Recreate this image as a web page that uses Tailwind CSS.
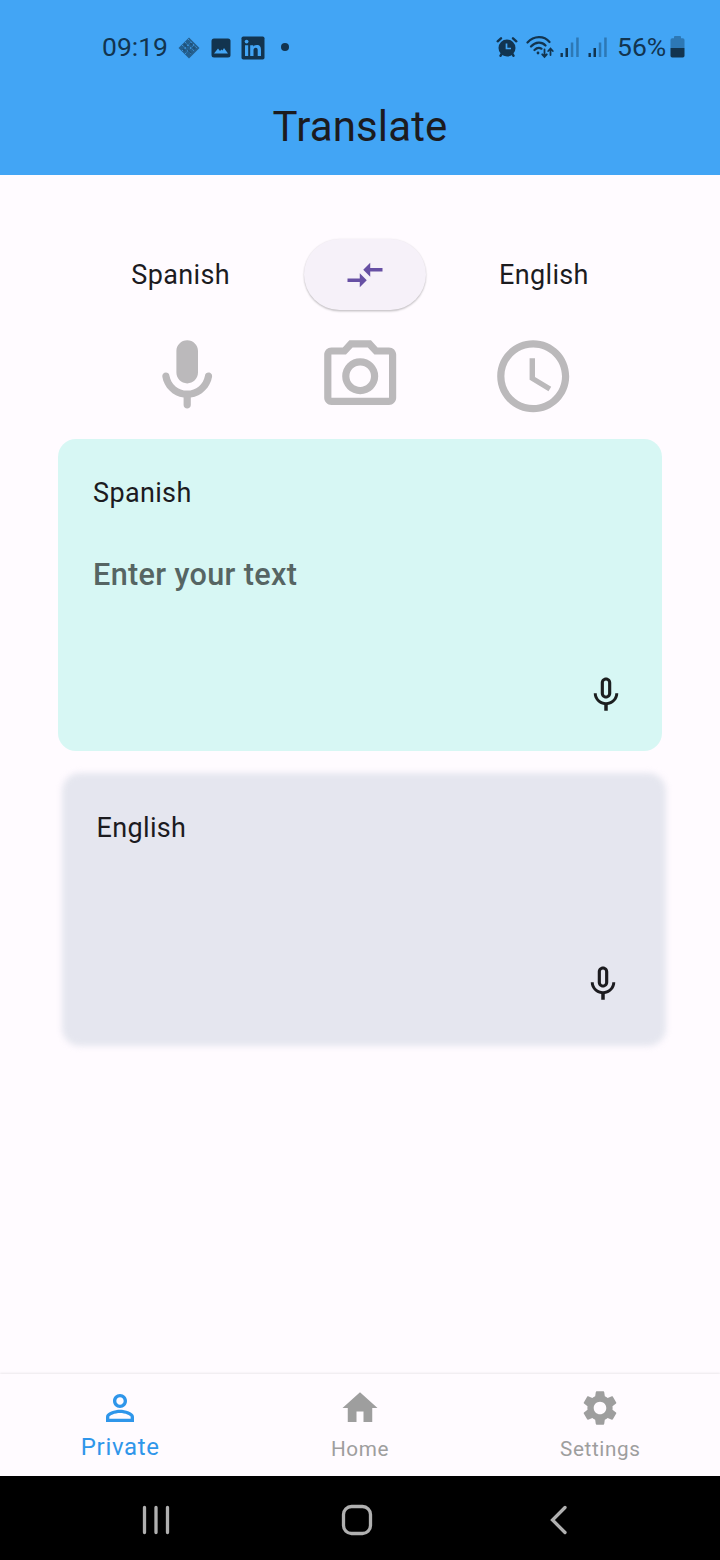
<!DOCTYPE html>
<html lang="en">
<head>
<meta charset="utf-8">
<title>Translate</title>
<script src="https://cdn.jsdelivr.net/npm/@tailwindcss/browser@4"></script>
</head>
<body class="w-[720px] h-[1560px] flex flex-col overflow-hidden bg-[#fffbff] font-[Roboto,sans-serif] text-[#1c1b1f]">
  <header class="h-[175px] shrink-0 bg-[#42a5f5] flex flex-col">
    <div class="h-[94px] shrink-0 flex items-center justify-between pl-[102px] pr-[35px] text-[#12344f]">
      <div class="flex items-center">
        <span class="w-[75px] text-[26.500px] leading-[30px] whitespace-nowrap">09:19</span>
        <svg class="w-6 h-6 mt-[1px]" viewBox="0 0 24 24"><path d="M12 1.500 22.500 12 12 22.500 1.500 12Z" fill="#245f8e"/><path d="M5 9l10 10M8 6l10 10M11 3l10 10M8 18 18 8M5 15 15 5" stroke="#42a5f5" stroke-width=".7" stroke-dasharray="2 1.500" fill="none"/><path d="M7 8l3 3M13 7l2 2M11 14l3 3M6 13l2 2M16 11l2 2" stroke="#1f5078" stroke-width="1.500"/></svg>
        <svg class="w-5 h-5 ml-[10px] mt-[1px]" viewBox="0 0 20 20"><rect x=".5" y=".5" width="19" height="19" rx="2.500" fill="#12344f"/><path d="M3 15.500 7 10.500l2 2.500 1.500-1.500 1 1 1.500-2.500 4 5.500Z" fill="#42a5f5"/></svg>
        <svg class="w-6 h-6 ml-[10px] mt-[1px]" viewBox="0 0 24 24"><rect x=".5" y=".5" width="23" height="23" rx="1.800" fill="#12344f"/><path d="M4 9.200h3.200V20H4ZM9.200 9.200h3.100v1.500c.7-1.200 1.900-1.800 3.500-1.800 3.200 0 4.200 2 4.200 5V20h-3.300v-5.500c0-1.600-.4-2.700-1.900-2.700s-2.300 1-2.300 2.700V20H9.200Z" fill="#42a5f5"/><circle cx="5.600" cy="5.600" r="1.900" fill="#42a5f5"/></svg>
        <span class="ml-[16px] size-2 rounded-full bg-[#12344f]"></span>
      </div>
      <div class="flex items-center">
        <svg class="w-[22px] h-[22px]" viewBox="0 0 22 22" fill="none" stroke="#12344f"><circle cx="11" cy="12" r="8.500" fill="#12344f" stroke="none"/><path d="M1.700 5.300 5 2.300M20.300 5.300 17 2.300" stroke-width="2.400" stroke-linecap="round"/><path d="M6 17.500 4.500 19.700M16 17.500l1.500 2.200" stroke-width="2.400" stroke-linecap="round"/><path d="M10.500 7.500v5h4.500" stroke="#42a5f5" stroke-width="1.700"/></svg>
        <svg class="w-[30px] h-[24px] ml-[8px]" viewBox="0 0 30 24" fill="none" stroke="#12344f" stroke-width="2.200" stroke-linecap="round"><path d="M1.500 7.500C8 .5 18 .5 23.500 7M5 11.500c4.500-5 11-5 14.500-1M8.500 15c2.500-2.500 5-2.500 7-1.300"/><circle cx="12" cy="18" r="1.400" fill="#12344f" stroke="none"/><path d="M18.500 14.500v7M16.200 19.300l2.300 2.500 2.300-2.500M24.500 20v-6M22.200 16l2.300-2.500 2.300 2.500" stroke-width="1.800"/></svg>
        <svg class="w-[19px] h-5 ml-[4px]" viewBox="0 0 19 20"><path d="M.500 16h2.400v4H.5ZM5.500 11h2.500v9H5.500Z" fill="#12344f"/><path d="M10.800 5.500h2.500V20h-2.500ZM16.200 .5h2.500V20h-2.500Z" fill="#2d78b5"/></svg>
        <svg class="w-[19px] h-5 ml-[9px]" viewBox="0 0 19 20"><path d="M.500 16h2.400v4H.5ZM5.500 11h2.500v9H5.500Z" fill="#12344f"/><path d="M10.800 5.500h2.500V20h-2.500ZM16.200 .5h2.500V20h-2.500Z" fill="#2d78b5"/></svg>
        <span class="ml-[10px] w-[51px] text-[26.500px] leading-[30px] whitespace-nowrap">56%</span>
        <svg class="w-[15px] h-[22px] ml-[1.500px] mr-[.5px]" viewBox="0 0 15 22"><path d="M4 2.200V1q0-1 1-1h5q1 0 1 1v1.200h1.800q1.700 0 1.700 1.700V12H.5V3.900q0-1.700 1.700-1.700Z" fill="#2d78b5"/><path d="M.5 12h14v7.800q0 1.700-1.700 1.700H2.200q-1.700 0-1.700-1.700Z" fill="#12344f"/></svg>
      </div>
    </div>
    <h1 class="text-center text-[42px] tracking-[0.150px] leading-[66px]">Translate</h1>
  </header>

  <main class="h-[1199px] shrink-0 flex flex-col">
    <div class="mt-[64px] h-[72px] shrink-0 flex items-start text-[27px] leading-[73px] tracking-[0.350px]">
      <span class="w-[303.500px] pl-[131.300px]">Spanish</span>
      <button class="w-[122px] h-[71px] rounded-[36px] bg-[#f6f1f9] shadow-[0_1.500px_2px_rgba(0,0,0,0.200),0_0_2px_rgba(0,0,0,0.080)] flex items-center justify-center">
        <svg class="size-[42px]" viewBox="0 0 24 24" fill="#6750a4"><path d="M9.010 14H2v2h7.010v3L13 15l-3.990-4v3zm5.980-1v-3H22V8h-7.010V5L11 9l3.990 4z"/></svg>
      </button>
      <span class="pl-[73.500px]">English</span>
    </div>
    <div class="mt-[22px] h-[86px] shrink-0 flex items-center justify-center gap-[86.600px]">
      <svg class="size-[86.400px] shrink-0" viewBox="0 0 24 24" fill="#bbb9bb"><path d="M12 14c1.660 0 3-1.340 3-3V5c0-1.660-1.340-3-3-3S9 3.340 9 5v6c0 1.660 1.340 3 3 3zm5.910-3c-.490 0-.9.360-.980.850C16.520 14.200 14.470 16 12 16s-4.520-1.800-4.930-4.150c-.080-.490-.490-.850-.980-.850-.610 0-1.090.540-1 1.140.490 3 2.890 5.350 5.910 5.780V20c0 .550.450 1 1 1s1-.450 1-1v-2.080c3.020-.430 5.420-2.780 5.910-5.780.1-.6-.390-1.140-1-1.140z"/></svg>
      <svg class="size-[86.400px] shrink-0" viewBox="0 0 24 24" fill="#bbb9bb" fill-rule="evenodd"><path d="M14.120 4l1.830 2H20v12H4V6h4.050l1.830-2h4.240M15 2H9L7.170 4H4c-1.100 0-2 .9-2 2v12c0 1.100.9 2 2 2h16c1.100 0 2-.9 2-2V6c0-1.100-.9-2-2-2h-3.170L15 2z"/><path d="M12 7a5 5 0 1 0 0 10 5 5 0 0 0 0-10Zm0 2a3 3 0 1 1 0 6 3 3 0 0 1 0-6Z"/></svg>
      <svg class="size-[86.400px] shrink-0" viewBox="0 0 24 24" fill="#bbb9bb"><path d="M11.990 2C6.470 2 2 6.480 2 12s4.470 10 9.990 10C17.520 22 22 17.520 22 12S17.520 2 11.990 2zM12 20c-4.420 0-8-3.580-8-8s3.580-8 8-8 8 3.580 8 8-3.580 8-8 8zm.5-13H11v6l5.250 3.150.750-1.230-4.500-2.670z"/></svg>
    </div>
    <section class="mt-[20.400px] ml-[58px] w-[604px] h-[311.400px] shrink-0 rounded-[18px] bg-[#d7f7f4] flex flex-col pl-[35px] pr-[35px]">
      <p class="mt-[36px] text-[27px] leading-[36px] tracking-[0.350px]">Spanish</p>
      <p class="mt-[44px] text-[30.600px] leading-[40px] tracking-[0.350px] font-medium text-[#566563]">Enter your text</p>
      <svg class="mt-[78.500px] size-[42px] self-end shrink-0" viewBox="0 0 24 24" fill="#1c1f1f"><path d="M12 14c1.660 0 3-1.340 3-3V5c0-1.660-1.340-3-3-3S9 3.340 9 5v6c0 1.660 1.340 3 3 3zm-1.200-9.100c0-.660.540-1.200 1.200-1.200s1.200.540 1.200 1.200l-.010 6.200c0 .660-.530 1.200-1.190 1.200s-1.200-.540-1.200-1.200V4.900zM17.300 11c0 3-2.540 5.100-5.300 5.100S6.700 14 6.700 11H5c0 3.410 2.720 6.230 6 6.720V21h2v-3.280c3.280-.480 6-3.300 6-6.720h-1.700z"/></svg>
    </section>
    <section class="relative z-0 mt-[22.200px] ml-[62px] w-[604px] h-[273.500px] shrink-0 flex flex-col pl-[34.500px] pr-[42.500px]">
      <div class="absolute inset-0 -z-10 rounded-[18px] bg-[#e5e6ef] blur-[3px]"></div>
      <p class="mt-[37.400px] text-[27px] leading-[36px] tracking-[0.350px]">English</p>
      <svg class="mt-[117px] size-[42px] self-end shrink-0" viewBox="0 0 24 24" fill="#1c1b1f"><path d="M12 14c1.660 0 3-1.340 3-3V5c0-1.660-1.340-3-3-3S9 3.340 9 5v6c0 1.660 1.340 3 3 3zm-1.200-9.100c0-.660.540-1.200 1.200-1.200s1.200.540 1.200 1.200l-.010 6.200c0 .660-.530 1.200-1.190 1.200s-1.200-.540-1.200-1.200V4.900zM17.300 11c0 3-2.540 5.100-5.300 5.100S6.700 14 6.700 11H5c0 3.410 2.720 6.230 6 6.720V21h2v-3.280c3.280-.480 6-3.300 6-6.720h-1.700z"/></svg>
    </section>
  </main>

  <nav class="h-[102px] shrink-0 grid grid-cols-3 bg-[#fffbff] shadow-[0_-1px_2px_rgba(0,0,0,0.080)] text-[#9e9e9e] text-[20.700px] tracking-[0.600px]">
    <div class="flex flex-col items-center pt-[13px] text-[#2f96ea]">
      <svg class="size-[42px]" viewBox="0 0 24 24" fill="#2f96ea"><path d="M12 5.900c1.160 0 2.100.940 2.100 2.100s-.940 2.100-2.100 2.100S9.900 9.160 9.900 8s.940-2.100 2.100-2.100m0 9c2.970 0 6.100 1.460 6.100 2.100v1.100H5.900V17c0-.640 3.130-2.100 6.100-2.100M12 4C9.790 4 8 5.790 8 8s1.790 4 4 4 4-1.790 4-4-1.790-4-4-4zm0 9c-2.670 0-8 1.340-8 4v3h16v-3c0-2.660-5.330-4-8-4z"/></svg>
      <span class="mt-[3px] text-[24px] leading-[30px] tracking-[0.700px] pl-[.5px]">Private</span>
    </div>
    <div class="flex flex-col items-center pt-[13px]">
      <svg class="size-[42px]" viewBox="0 0 24 24" fill="#9e9e9e"><path d="M10 20v-6h4v6h5v-8h3L12 3 2 12h3v8z"/></svg>
      <span class="mt-[5px] leading-[30px]">Home</span>
    </div>
    <div class="flex flex-col items-center pt-[13px]">
      <svg class="size-[42px]" viewBox="0 0 24 24" fill="#9e9e9e"><path d="M19.140 12.940c.040-.3.060-.610.060-.940 0-.320-.020-.640-.070-.940l2.030-1.580c.180-.140.230-.410.120-.610l-1.920-3.320c-.120-.220-.370-.290-.590-.220l-2.390.960c-.5-.380-1.030-.7-1.620-.940l-.360-2.540c-.040-.240-.240-.410-.480-.410h-3.840c-.240 0-.430.170-.470.410l-.360 2.540c-.590.240-1.130.570-1.620.940l-2.390-.960c-.220-.080-.470 0-.590.220L2.740 8.870c-.120.210-.080.470.120.610l2.030 1.580c-.050.3-.090.630-.090.940s.020.640.070.940l-2.030 1.580c-.180.140-.230.410-.120.610l1.920 3.320c.120.220.370.290.590.220l2.390-.960c.5.380 1.030.7 1.620.940l.360 2.540c.050.240.240.410.480.410h3.840c.240 0 .440-.170.470-.410l.360-2.540c.590-.240 1.130-.560 1.620-.940l2.390.960c.220.080.470 0 .590-.220l1.920-3.320c.120-.220.070-.470-.120-.610l-2.010-1.580zM12 15.600c-1.980 0-3.600-1.620-3.600-3.600s1.620-3.600 3.600-3.600 3.600 1.620 3.600 3.600-1.620 3.600-3.600 3.600z"/></svg>
      <span class="mt-[5px] leading-[30px] pl-[.5px]">Settings</span>
    </div>
  </nav>

  <footer class="h-[84px] shrink-0 bg-black flex items-center pt-[4px] pl-[141px]">
    <svg class="w-[30px] h-[30px]" viewBox="0 0 30 30" stroke="#b0b0b0" stroke-width="3.300" stroke-linecap="round"><path d="M3.500 2.500v25M15 2.500v25M26.500 2.500v25"/></svg>
    <svg class="w-8 h-8 ml-[170px]" viewBox="0 0 32 32" fill="none" stroke="#b0b0b0" stroke-width="3.300"><rect x="2.500" y="2.500" width="27" height="27" rx="8"/></svg>
    <svg class="w-5 h-[30px] ml-[176px]" viewBox="0 0 20 30" fill="none" stroke="#b0b0b0" stroke-width="3.300" stroke-linecap="round"><path d="M16 2.500 3.500 15l12.500 12.500"/></svg>
  </footer>
</body>
</html>
